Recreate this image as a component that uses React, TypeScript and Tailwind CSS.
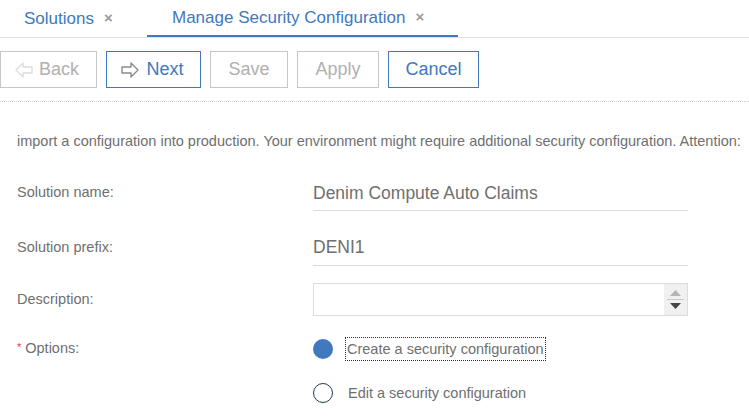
import React from "react";

const font = { fontFamily: '"Liberation Sans", Arial, sans-serif' };

function ArrowLeft({ color }: { color: string }) {
  return (
    <svg width="18" height="16" viewBox="0 0 18 16" fill="none">
      <path d="M1 8 L8 1 L8 5 L17 5 L17 11 L8 11 L8 15 Z" stroke={color} strokeWidth="1.4" strokeLinejoin="round" />
    </svg>
  );
}

function ArrowRight({ color }: { color: string }) {
  return (
    <svg width="18" height="16" viewBox="0 0 18 16" fill="none">
      <path d="M17 8 L10 1 L10 5 L1 5 L1 11 L10 11 L10 15 Z" stroke={color} strokeWidth="1.4" strokeLinejoin="round" />
    </svg>
  );
}

export default function App() {
  return (
    <div className="w-[749px] h-[418px] overflow-hidden bg-white" style={font}>
      {/* Tabs */}
      <div className="flex h-[38px] border-b border-[#e0e0e0]">
        <div className="flex items-center pl-[24px] w-[147px] text-[17px] text-[#4178be]">
          <span>Solutions</span>
          <span className="ml-[10px] text-[#9a9a9a] text-[15px] font-bold">×</span>
        </div>
        <div className="flex items-center pl-[25px] w-[311px] h-[37px] border-b-2 border-[#4178be] text-[17px] text-[#4178be]">
          <span>Manage Security Configuration</span>
          <span className="ml-[10px] text-[#9a9a9a] text-[15px] font-bold">×</span>
        </div>
      </div>

      {/* Toolbar */}
      <div className="flex gap-[9px] pt-[13px] h-[64px] border-b border-dotted border-[#cfcfcf]">
        <button className="flex items-center justify-center gap-[6px] w-[97px] h-[37px] border border-[#c6c6c6] text-[18px] text-[#b0b0b0] pr-[3px]">
          <ArrowLeft color="#dcdcdc" />
          <span>Back</span>
        </button>
        <button className="flex items-center justify-center gap-[7px] w-[95px] h-[37px] border border-[#4178be] text-[18px] text-[#4178be] pr-[2px]">
          <ArrowRight color="#8a8a8a" />
          <span>Next</span>
        </button>
        <button className="flex items-center justify-center w-[78px] h-[37px] border border-[#c6c6c6] text-[18px] text-[#b0b0b0]">
          Save
        </button>
        <button className="flex items-center justify-center w-[82px] h-[37px] border border-[#c6c6c6] text-[18px] text-[#b0b0b0]">
          Apply
        </button>
        <button className="flex items-center justify-center w-[91px] h-[37px] border border-[#4178be] text-[18px] text-[#4178be]">
          Cancel
        </button>
      </div>

      {/* Content */}
      <div className="pl-[17px] pt-[29px]">
        <p className="text-[14.5px] leading-[20px] text-[#6f6f6f] whitespace-nowrap">
          import a configuration into production. Your environment might require additional security configuration. Attention:
        </p>

        <div className="mt-[24px] flex flex-col">
          <div className="flex items-center h-[36px]">
            <div className="w-[296px] text-[14.5px] text-[#6f6f6f]">Solution name:</div>
            <div className="w-[375px] h-[36px] border-b border-[#dcdcdc] flex items-center text-[17.5px] text-[#6f6f6f] pt-[2px]">
              Denim Compute Auto Claims
            </div>
          </div>
          <div className="flex items-center h-[37px] mt-[18px]">
            <div className="w-[296px] text-[14.5px] text-[#6f6f6f]">Solution prefix:</div>
            <div className="w-[375px] h-[37px] border-b border-[#dcdcdc] flex items-center text-[17.5px] text-[#6f6f6f] pt-[1px]">
              DENI1
            </div>
          </div>
          <div className="flex items-center h-[33px] mt-[17px]">
            <div className="w-[296px] text-[14.5px] text-[#6f6f6f]">Description:</div>
            <div className="w-[375px] h-[33px] border border-[#dcdcdc] flex justify-end">
              <div className="w-[23px] h-full bg-[#f0f0f0] flex flex-col items-center justify-center">
                <svg width="11" height="6" viewBox="0 0 11 6"><path d="M0 6 L5.5 0 L11 6 Z" fill="#b4b4b4" /></svg>
                <div className="w-[17px] h-px bg-[#c8c8c8] my-[3px]" />
                <svg width="11" height="6" viewBox="0 0 11 6"><path d="M0 0 L11 0 L5.5 6 Z" fill="#444" /></svg>
              </div>
            </div>
          </div>
          <div className="flex mt-[21px]">
            <div className="w-[296px] text-[14.5px] text-[#6f6f6f] h-[24px] flex items-center">
              <span className="text-[#e0393e] text-[11px] mr-[4px] -mt-[4px]">*</span>
              <span>Options:</span>
            </div>
            <div className="flex flex-col gap-[20px]">
              <div className="flex items-center h-[24px]">
                <div className="w-[20px] h-[20px] rounded-full bg-[#4178be]" />
                <span className="ml-[13px] px-[1px] outline outline-1 outline-dotted outline-[#333] text-[14.5px] leading-[22px] text-[#6f6f6f]">
                  Create a security configuration
                </span>
              </div>
              <div className="flex items-center h-[24px]">
                <div className="w-[20px] h-[20px] rounded-full border-[1.5px] border-[#1f3b53]" />
                <span className="ml-[15px] text-[14.5px] leading-[22px] text-[#6f6f6f]">
                  Edit a security configuration
                </span>
              </div>
            </div>
          </div>
        </div>
      </div>
    </div>
  );
}
